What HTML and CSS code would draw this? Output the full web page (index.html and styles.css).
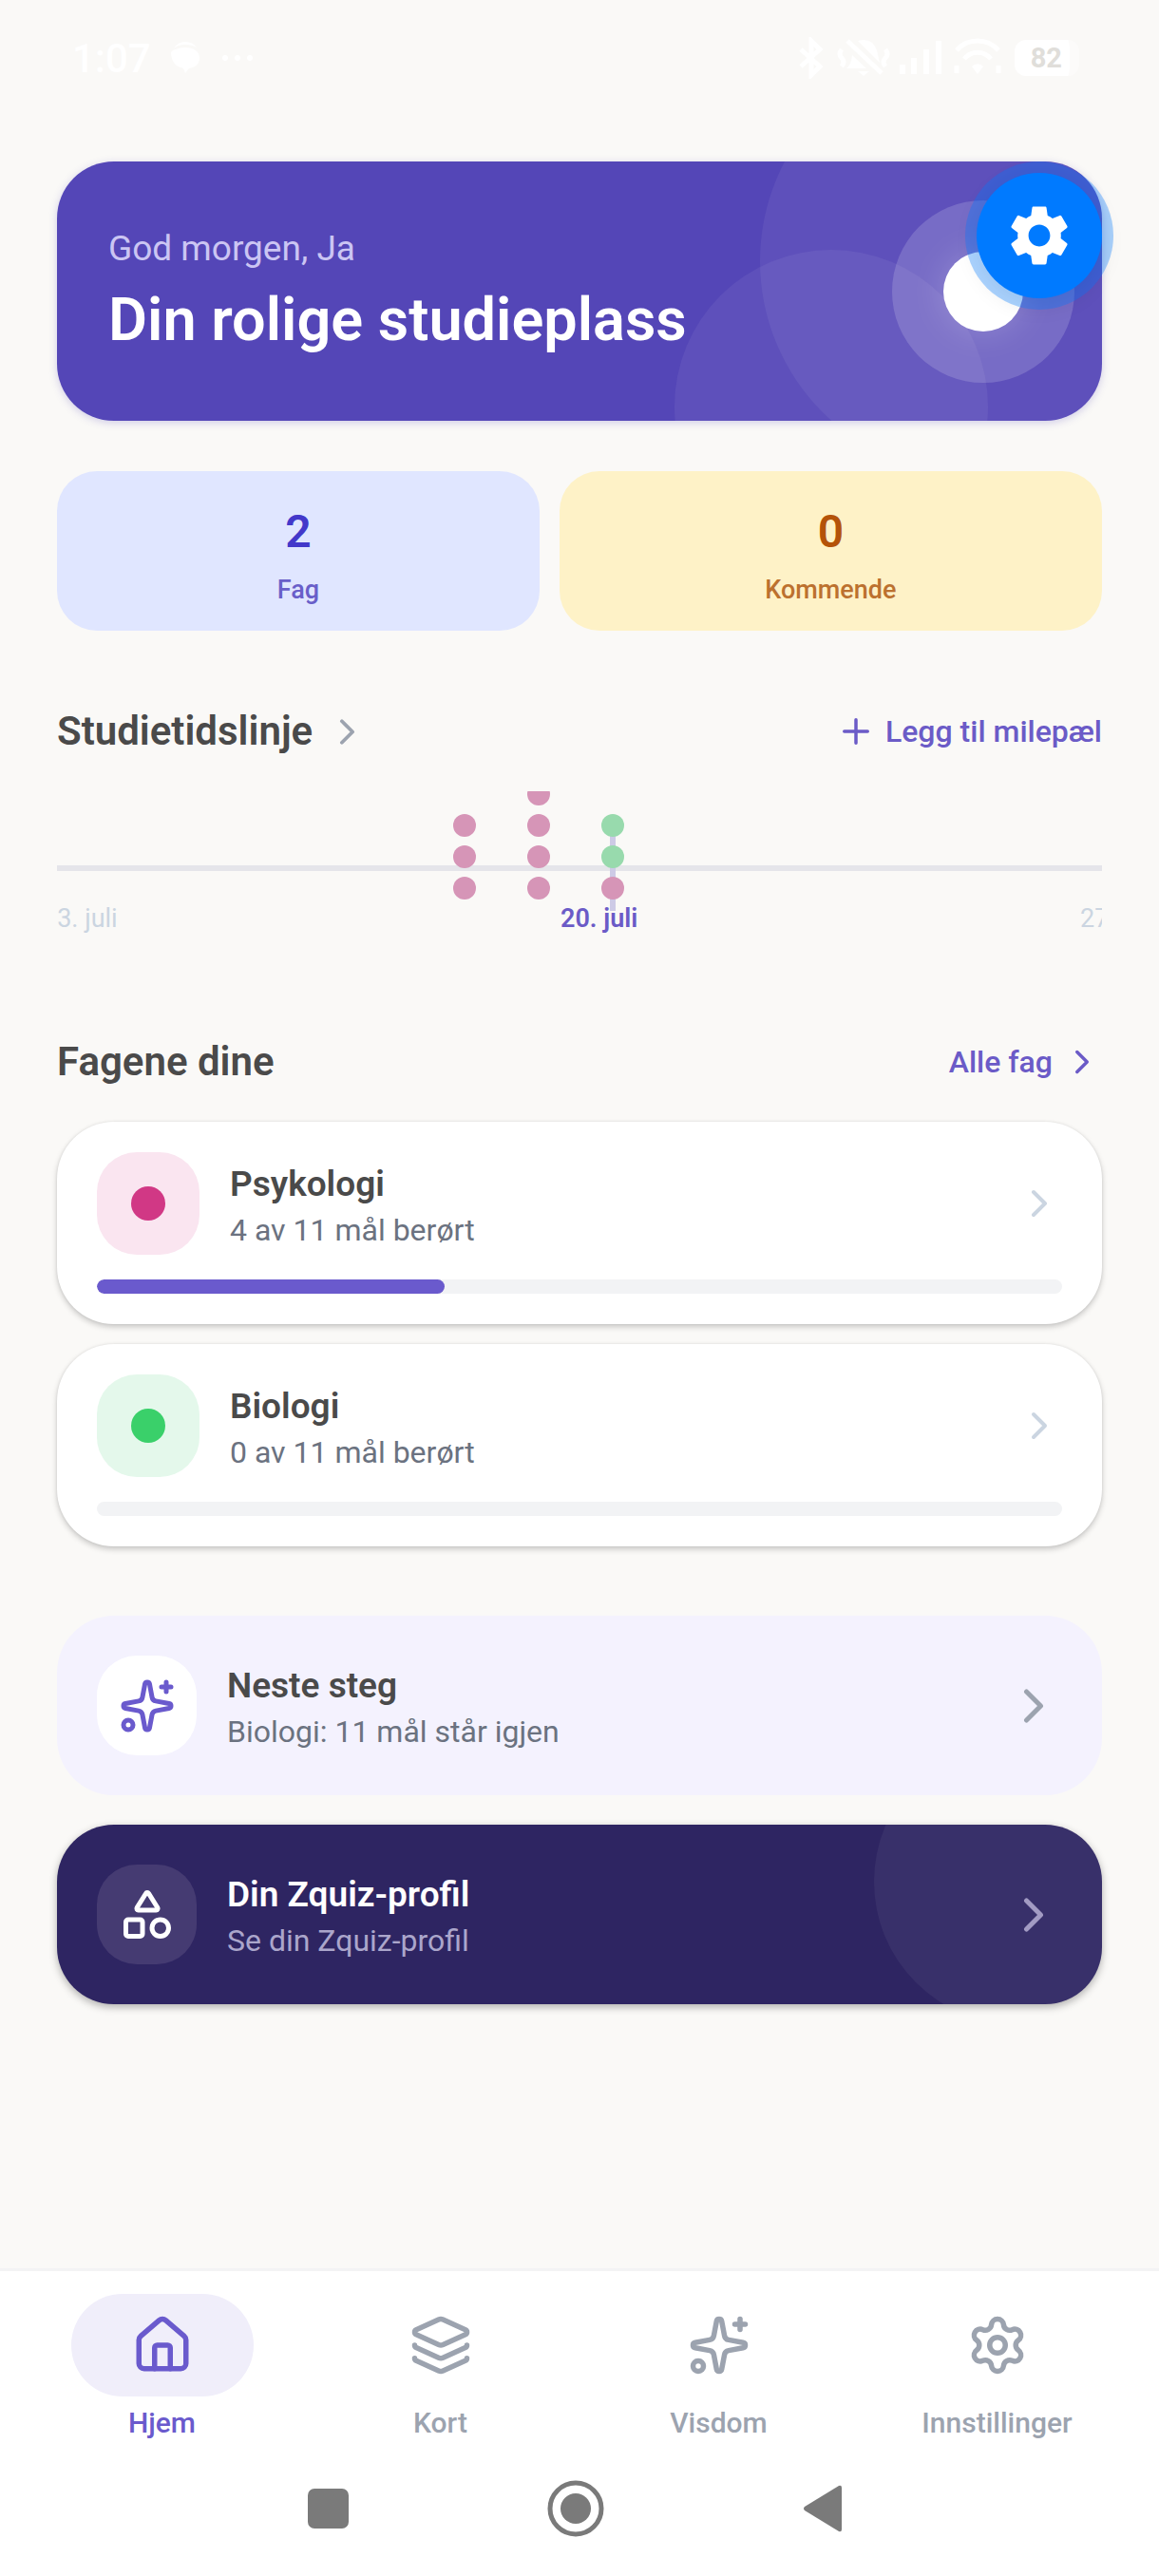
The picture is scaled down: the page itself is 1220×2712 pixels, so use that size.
FILE: index.html
```html
<!DOCTYPE html>
<html lang="no">
  <head>
    <meta charset="utf-8">
    <meta name="viewport" content="width=device-width, initial-scale=1">
    <title>Zquiz</title>
    <link rel="stylesheet" href="styles.css">
  </head>
  <body>
    <!-- shared icons -->
    <svg class="sprite" aria-hidden="true">
      <symbol id="chevron" viewBox="0 0 24 24"><path d="m9 18 6-6-6-6"/></symbol>
      <symbol id="sparkles" viewBox="0 0 24 24">
        <path d="M11.017 2.814a1 1 0 0 1 1.966 0l1.051 5.558a2 2 0 0 0 1.594 1.594l5.558 1.051a1 1 0 0 1 0 1.966l-5.558 1.051a2 2 0 0 0-1.594 1.594l-1.051 5.558a1 1 0 0 1-1.966 0l-1.051-5.558a2 2 0 0 0-1.594-1.594l-5.558-1.051a1 1 0 0 1 0-1.966l5.558-1.051a2 2 0 0 0 1.594-1.594z"/>
        <path d="M20 2v4M22 4h-4"/>
        <circle cx="4" cy="20" r="2"/>
      </symbol>
    </svg>

    <header class="status">
      <span class="time">1:07</span>
      <svg class="status-left" viewBox="0 0 90 44" aria-hidden="true">
        <path d="M6 12q4-7 12-7 8 0 12 6-5-3-12-3-8 0-12 4zM18 11c9 0 15 4 15 11s-5 10-11 11l-4 5-2-5C8 31 3 26 3 16q2-3 5-3 4-2 10-2z"/>
        <circle cx="60" cy="22" r="3"/><circle cx="73" cy="22" r="3"/><circle cx="86" cy="22" r="3"/>
      </svg>
      <svg class="status-right" viewBox="0 0 216 44" aria-hidden="true">
        <g class="line">
          <path d="M3 13l20 18-9 9V4l9 9L3 31"/>
          <path d="M52 4l36 34M46 13q-4 5 0 9q4 4 0 9M92 13q4 5 0 9q-4 4 0 9"/>
          <path d="M167 14a29 29 0 0 1 44 0M175 23a18 18 0 0 1 28 0"/>
          <path d="M167 30v8M211 30v8"/>
        </g>
        <path d="M51 33q5-4 6-14l15 14zM63 4q15-4 20 10l3 13zM63 36h12l-6 5z"/>
        <path d="M107 29h6v10h-6zM119 22h6v17h-6zM132 13h6v26h-6zM145 4h6v35h-6z"/>
        <path d="M183 31a8 8 0 0 1 12 0l-6 8z"/>
      </svg>
      <span class="battery">82</span>
    </header>

    <button class="fab" type="button" aria-label="Verktøy">
      <svg viewBox="0 0 24 24"><path d="M19.14 12.94c.04-.3.06-.61.06-.94 0-.32-.02-.64-.07-.94l2.03-1.58c.18-.14.23-.41.12-.61l-1.92-3.32c-.12-.22-.37-.29-.59-.22l-2.39.96c-.5-.38-1.03-.7-1.62-.94l-.36-2.54c-.04-.24-.24-.41-.48-.41h-3.84c-.24 0-.43.17-.47.41l-.36 2.54c-.59.24-1.13.57-1.62.94l-2.39-.96c-.22-.08-.47 0-.59.22L2.74 8.87c-.12.21-.08.47.12.61l2.03 1.58c-.05.3-.09.63-.09.94s.02.64.07.94l-2.03 1.58c-.18.14-.23.41-.12.61l1.92 3.32c.12.22.37.29.59.22l2.39-.96c.5.38 1.03.7 1.62.94l.36 2.54c.05.24.24.41.48.41h3.84c.24 0 .44-.17.47-.41l.36-2.54c.59-.24 1.13-.56 1.62-.94l2.39.96c.22.08.47 0 .59-.22l1.92-3.32c.12-.22.07-.47-.12-.61l-2.01-1.58zM12 15.6c-1.98 0-3.6-1.62-3.6-3.6s1.62-3.6 3.6-3.6 3.6 1.62 3.6 3.6-1.62 3.6-3.6 3.6z"/></svg>
    </button>

    <main class="content">
      <section class="hero">
        <p class="greeting">God morgen, Ja</p>
        <h1>Din rolige studieplass</h1>
        <span class="halo"><span class="sun"></span></span>
      </section>

      <section class="stats">
        <div class="stat stat-subjects"><strong>2</strong><span>Fag</span></div>
        <div class="stat stat-upcoming"><strong>0</strong><span>Kommende</span></div>
      </section>

      <div class="section-head">
        <a class="section-title" href="#tidslinje"><h2>Studietidslinje</h2><svg class="icon icon-md"><use href="#chevron"/></svg></a>
        <button class="action" type="button"><svg class="icon icon-sm" viewBox="0 0 24 24"><path d="M5 12h14M12 5v14"/></svg>Legg til milepæl</button>
      </div>

      <!-- one day is 78px wide -->
      <section class="timeline" id="tidslinje">
        <div class="today" style="left: 582px"></div>
        <div class="day" style="left: 417px"><i></i><i></i><i></i></div>
        <div class="day" style="left: 495px"><i></i><i></i><i></i><i></i></div>
        <div class="day" style="left: 573px"><i class="green"></i><i class="green"></i><i></i></div>
        <span class="date" style="left: -15px">13. juli</span>
        <span class="date current" style="left: 530px">20. juli</span>
        <span class="date" style="left: 1077px">27. juli</span>
      </section>

      <div class="section-head">
        <h2>Fagene dine</h2>
        <a class="action" href="#fag">Alle fag<svg class="icon icon-sm"><use href="#chevron"/></svg></a>
      </div>

      <section class="subjects" id="fag">
        <a class="subject" href="#psykologi">
          <div class="row">
            <span class="tile pink"></span>
            <div class="text"><h3>Psykologi</h3><p>4 av 11 mål berørt</p></div>
            <svg class="icon icon-lg"><use href="#chevron"/></svg>
          </div>
          <div class="bar"><div class="fill" style="width: 36%"></div></div>
        </a>
        <a class="subject" href="#biologi">
          <div class="row">
            <span class="tile green"></span>
            <div class="text"><h3>Biologi</h3><p>0 av 11 mål berørt</p></div>
            <svg class="icon icon-lg"><use href="#chevron"/></svg>
          </div>
          <div class="bar"><div class="fill" style="width: 0"></div></div>
        </a>
      </section>

      <section class="links">
        <a class="link-card next" href="#neste">
          <span class="badge"><svg class="icon icon-xl"><use href="#sparkles"/></svg></span>
          <div class="text"><h3>Neste steg</h3><p>Biologi: 11 mål står igjen</p></div>
          <svg class="icon icon-xl"><use href="#chevron"/></svg>
        </a>
        <a class="link-card profile" href="#profil">
          <span class="badge"><svg class="icon icon-xl" viewBox="0 0 24 24"><path d="M8.3 10a.7.7 0 0 1-.626-1.079L11.4 3a.7.7 0 0 1 1.198-.043L16.3 8.9a.7.7 0 0 1-.572 1.1Z"/><rect x="3" y="14" width="7" height="7" rx="1"/><circle cx="17.5" cy="17.5" r="3.5"/></svg></span>
          <div class="text"><h3>Din Zquiz-profil</h3><p>Se din Zquiz-profil</p></div>
          <svg class="icon icon-xl"><use href="#chevron"/></svg>
        </a>
      </section>
    </main>

    <nav class="tabs">
      <a class="tab active" href="#hjem">
        <span class="pill"><svg class="icon" viewBox="0 0 24 24"><path d="M15 21v-8a1 1 0 0 0-1-1h-4a1 1 0 0 0-1 1v8"/><path d="M3 10a2 2 0 0 1 .709-1.528l7-5.999a2 2 0 0 1 2.582 0l7 5.999A2 2 0 0 1 21 10v9a2 2 0 0 1-2 2H5a2 2 0 0 1-2-2z"/></svg></span>
        Hjem
      </a>
      <a class="tab" href="#kort">
        <span class="pill"><svg class="icon" viewBox="0 0 24 24"><path d="M12.83 2.18a2 2 0 0 0-1.66 0L2.6 6.08a1 1 0 0 0 0 1.83l8.58 3.91a2 2 0 0 0 1.66 0l8.58-3.9a1 1 0 0 0 0-1.83z"/><path d="M2 12a1 1 0 0 0 .58.91l8.6 3.91a2 2 0 0 0 1.65 0l8.58-3.9A1 1 0 0 0 22 12"/><path d="M2 17a1 1 0 0 0 .58.91l8.6 3.91a2 2 0 0 0 1.65 0l8.58-3.9A1 1 0 0 0 22 17"/></svg></span>
        Kort
      </a>
      <a class="tab" href="#visdom">
        <span class="pill"><svg class="icon"><use href="#sparkles"/></svg></span>
        Visdom
      </a>
      <a class="tab" href="#innstillinger">
        <span class="pill"><svg class="icon" viewBox="0 0 24 24"><path d="M9.671 4.136a2.34 2.34 0 0 1 4.659 0 2.34 2.34 0 0 0 3.319 1.915 2.34 2.34 0 0 1 2.33 4.033 2.34 2.34 0 0 0 0 3.831 2.34 2.34 0 0 1-2.33 4.033 2.34 2.34 0 0 0-3.319 1.915 2.34 2.34 0 0 1-4.659 0 2.34 2.34 0 0 0-3.32-1.915 2.34 2.34 0 0 1-2.33-4.033 2.34 2.34 0 0 0 0-3.831A2.34 2.34 0 0 1 6.35 6.051a2.34 2.34 0 0 0 3.319-1.915"/><circle cx="12" cy="12" r="3"/></svg></span>
        Innstillinger
      </a>
    </nav>

    <footer class="system">
      <button type="button" aria-label="Oversikt"><svg viewBox="0 0 60 60"><rect x="8" y="9" width="43" height="42" rx="7"/></svg></button>
      <button type="button" aria-label="Hjem"><svg viewBox="0 0 60 60"><circle class="ring" cx="30" cy="30" r="27"/><circle cx="30" cy="30" r="16"/></svg></button>
      <button type="button" aria-label="Tilbake"><svg viewBox="0 0 60 60"><path d="M47 6q3-1 3 2v44q0 3-3 2L11 32q-2-2 0-4z"/></svg></button>
    </footer>
  </body>
</html>
```

FILE: styles.css
```css
* {
  box-sizing: border-box;
}
body {
  display: flex;
  flex-direction: column;
  min-height: 100vh;
  margin: 0;
  position: relative;
  background: #faf9f7;
  color: #4a4a4a;
  font-family: Roboto, "Liberation Sans", sans-serif;
}
h1, h2, h3, p {
  margin: 0;
}
a {
  color: inherit;
  text-decoration: none;
}
button {
  padding: 0;
  border: 0;
  background: none;
  font: inherit;
  color: inherit;
}
svg {
  display: block;
  flex: none;
}
.sprite {
  position: absolute;
  width: 0;
  height: 0;
}

/* icons */
.icon {
  width: 66px;
  height: 66px;
  fill: none;
  stroke: currentColor;
  stroke-width: 2;
  stroke-linecap: round;
  stroke-linejoin: round;
}
.icon-sm { width: 42px; height: 42px; }
.icon-md { width: 45px; height: 45px; color: #9ca3af; }
.icon-lg { width: 48px; height: 48px; color: #cbd5e1; }
.icon-xl { width: 60px; height: 60px; }

/* status bar */
.status {
  display: flex;
  align-items: center;
  height: 122px;
  padding: 0 84px 0 76px;
  color: #fff;
}
.time {
  font-size: 42px;
  font-weight: 500;
}
.status svg {
  height: 44px;
  fill: #fff;
}
.status .line {
  fill: none;
  stroke: #fff;
  stroke-width: 5;
}
.status-left {
  width: 90px;
  margin-left: 18px;
}
.status-right {
  width: 216px;
  margin-left: auto;
}
.battery {
  margin-left: 12px;
  padding: 0 8px 0 17px;
  border-right: 10px solid #fcfbfa;
  border-radius: 12px;
  background: #fff;
  color: #e0deda;
  font-size: 29px;
  font-weight: 700;
  line-height: 38px;
}

/* floating button */
.fab {
  position: absolute;
  top: 182px;
  right: 60px;
  z-index: 2;
  display: grid;
  place-items: center;
  width: 132px;
  height: 132px;
  border-radius: 50%;
  background: #007aff;
  box-shadow: 0 0 0 12px rgba(0, 122, 255, 0.33), 0 6px 24px rgba(0, 0, 0, 0.1);
}
.fab svg {
  width: 76px;
  height: 76px;
  fill: #fff;
}

.content {
  flex: 1;
  padding: 48px 60px;
}

/* hero */
.hero {
  position: relative;
  overflow: hidden;
  padding: 69px 54px;
  border-radius: 60px;
  background: #5446b7;
  box-shadow: 0 2px 9px rgba(84, 70, 183, 0.25);
  color: #fff;
}
.hero::before,
.hero::after {
  content: "";
  position: absolute;
  border-radius: 50%;
  background: rgba(255, 255, 255, 0.06);
}
.hero::before {
  top: -120px;
  right: -90px;
  width: 450px;
  height: 450px;
}
.hero::after {
  top: 93px;
  right: 120px;
  width: 330px;
  height: 330px;
}
.greeting {
  margin-bottom: 15px;
  color: #cbc5f3;
  font-size: 37px;
  line-height: 46px;
}
h1 {
  font-size: 63px;
  font-weight: 600;
  line-height: 74px;
}
.halo {
  position: absolute;
  top: 41px;
  right: 29px;
  z-index: 1;
  display: grid;
  place-items: center;
  width: 192px;
  height: 192px;
  border-radius: 50%;
  background: rgba(255, 255, 255, 0.16);
}
.sun {
  width: 84px;
  height: 84px;
  border-radius: 50%;
  background: #fff;
  box-shadow: 0 0 36px rgba(255, 255, 255, 0.2);
}

/* stats */
.stats {
  display: flex;
  gap: 21px;
  margin: 53px 0 81px;
}
.stat {
  display: flex;
  flex-direction: column;
  gap: 11px;
  padding: 30px 0 27px;
  border-radius: 42px;
  text-align: center;
}
.stat strong {
  font-size: 48px;
  font-weight: 600;
  line-height: 68px;
}
.stat span {
  font-size: 27px;
  font-weight: 500;
  line-height: 32px;
}
.stat-subjects {
  flex: 8 1 0;
  background: #e0e6ff;
  color: #4338ca;
}
.stat-subjects span {
  color: #695fc9;
}
.stat-upcoming {
  flex: 9 1 0;
  background: #fef2c7;
  color: #b45309;
}
.stat-upcoming span {
  color: #bc712f;
}

/* section headings */
.section-head {
  display: flex;
  align-items: center;
  justify-content: space-between;
  margin-bottom: 38px;
}
.section-title {
  display: flex;
  align-items: center;
  gap: 14px;
}
h2 {
  font-size: 42px;
  font-weight: 600;
  line-height: 50px;
}
.action {
  display: flex;
  align-items: center;
  gap: 10px;
  color: #6b5bc7;
  font-size: 32px;
  font-weight: 500;
  line-height: 38px;
}

/* timeline */
.timeline {
  position: relative;
  overflow: hidden;
  height: 160px;
  margin-bottom: 100px;
}
.timeline::before {
  content: "";
  position: absolute;
  top: 78px;
  left: 0;
  right: 0;
  height: 6px;
  background: #e5e5ea;
}
.today {
  position: absolute;
  top: 36px;
  width: 6px;
  height: 90px;
  background: #cdcae6;
}
.day {
  position: absolute;
  bottom: 46px;
  display: flex;
  flex-direction: column;
  gap: 9px;
}
.day i {
  width: 24px;
  height: 24px;
  border-radius: 50%;
  background: #d695b7;
}
.day .green {
  background: #98daad;
}
.date {
  position: absolute;
  top: 118px;
  color: #cbd5e1;
  font-size: 27px;
  line-height: 32px;
  white-space: nowrap;
}
.current {
  color: #6b5bc7;
  font-weight: 600;
}

/* subject cards */
.subjects {
  display: flex;
  flex-direction: column;
  gap: 21px;
}
.subject {
  display: flex;
  flex-direction: column;
  gap: 26px;
  padding: 32px 42px;
  border-radius: 60px;
  background: #fff;
  box-shadow: 0 3px 6px rgba(0, 0, 0, 0.2), 0 0 3px rgba(0, 0, 0, 0.08);
}
.row {
  display: flex;
  align-items: center;
  gap: 32px;
}
.text {
  display: flex;
  flex: 1;
  flex-direction: column;
  gap: 6px;
  padding-top: 3px;
}
h3 {
  font-size: 37px;
  font-weight: 600;
  line-height: 46px;
}
.text p {
  color: #6b7280;
  font-size: 32px;
  line-height: 38px;
}
.tile {
  display: grid;
  place-items: center;
  width: 108px;
  height: 108px;
  border-radius: 42px;
}
.tile::before {
  content: "";
  width: 36px;
  height: 36px;
  border-radius: 50%;
}
.tile.pink { background: #fae5f0; }
.tile.pink::before { background: #d13885; }
.tile.green { background: #e4f8eb; }
.tile.green::before { background: #3ad06a; }
.bar {
  height: 15px;
  overflow: hidden;
  border-radius: 8px;
  background: #f2f3f5;
}
.fill {
  height: 100%;
  border-radius: 8px;
  background: #6a5acd;
}

/* link cards */
.links {
  display: flex;
  flex-direction: column;
  gap: 31px;
  margin-top: 73px;
}
.link-card {
  position: relative;
  overflow: hidden;
  display: flex;
  align-items: center;
  gap: 32px;
  padding: 42px;
  border-radius: 60px;
}
.badge {
  display: grid;
  place-items: center;
  width: 105px;
  height: 105px;
  border-radius: 42px;
}
.next {
  background: #f4f2fe;
  color: #9ca3af;
}
.next h3 {
  color: #4a4a4a;
}
.next .badge {
  background: #fff;
  color: #6a5acd;
}
.profile {
  background: #2e2562;
  color: #9e96c0;
  box-shadow: 0 3px 9px rgba(0, 0, 0, 0.3);
}
.profile::after {
  content: "";
  position: absolute;
  top: -90px;
  right: -60px;
  width: 300px;
  height: 300px;
  border-radius: 50%;
  background: rgba(255, 255, 255, 0.05);
}
.profile h3 {
  color: #fff;
}
.profile p {
  color: #aba6cb;
}
.profile .badge {
  background: #453b72;
  color: #fff;
}

/* bottom tabs */
.tabs {
  display: flex;
  padding: 24px 24px 0;
  border-top: 3px solid #f3f3f4;
  background: #fff;
}
.tab {
  display: flex;
  flex: 1;
  flex-direction: column;
  align-items: center;
  gap: 10px;
  color: #9ca3af;
  font-size: 30px;
  font-weight: 500;
  line-height: 36px;
}
.pill {
  display: grid;
  place-items: center;
  width: 192px;
  height: 108px;
  border-radius: 54px;
}
.active {
  color: #6a5acd;
}
.active .pill {
  background: #f0eefa;
}

/* system buttons */
.system {
  display: flex;
  align-items: center;
  justify-content: center;
  gap: 200px;
  height: 143px;
  padding-right: 8px;
  background: #fff;
}
.system svg {
  width: 60px;
  height: 60px;
  fill: #7a7a7a;
}
.system .ring {
  fill: none;
  stroke: #7a7a7a;
  stroke-width: 5;
}
```
